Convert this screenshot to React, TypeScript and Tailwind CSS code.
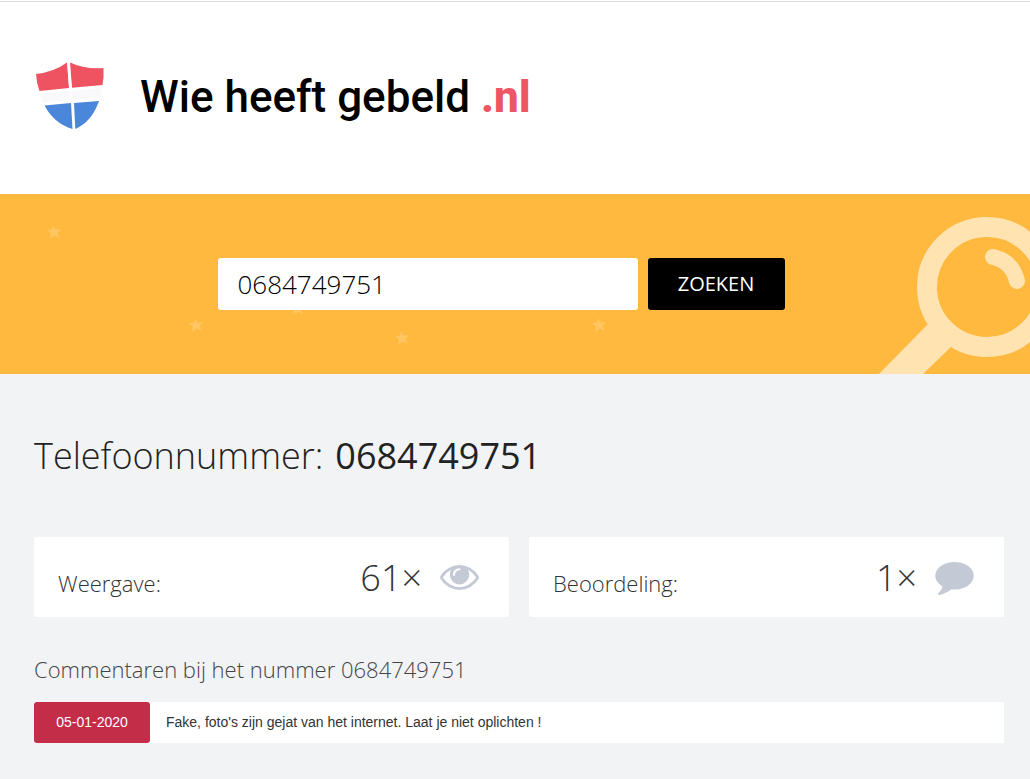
import { useState } from "react";

function ShieldLogo() {
  return (
    <svg viewBox="0 0 70 68" className="h-[68px] w-[70px] shrink-0" aria-hidden="true">
      <path d="M2 12Q20 10 33 0.500L35 26L5.500 29Q2.500 20.500 2 12Z" fill="#ef5362" />
      <path d="M36 0.500Q51 7.500 69.500 6Q70 14.500 68.500 23L38 25.800Z" fill="#ef5362" />
      <path d="M6 31.500L67.500 26L66 35.500L9 40.500Z" fill="#f9f9fc" />
      <path d="M33.300 0.500L35.800 0.500L40.500 66.500L38 66.500Z" fill="#ffffff" />
      <path d="M10.500 43.500L37 41L38.500 67Q20 61.500 10.500 43.500Z" fill="#4a86da" />
      <path d="M40 41L65 39Q58 59.500 41.300 67Z" fill="#4a86da" />
    </svg>
  );
}

const stars = [
  { x: 54, y: 38 },
  { x: 196, y: 131 },
  { x: 297, y: 114 },
  { x: 402, y: 144 },
  { x: 599, y: 131 },
];

function BannerArt() {
  return (
    <>
      <svg className="absolute top-0 left-0 h-[180px] w-[700px]" viewBox="0 0 700 180" aria-hidden="true">
        {stars.map((s) => (
          <path
            key={s.x}
            d="M-1 -7L1.500 -2.500L7 -3L3.500 1L6 6L0.500 3.500L-4 7L-3 1.500L-7 -2L-2 -2.500Z"
            transform={`translate(${s.x} ${s.y})`}
            fill="#ffc662"
          />
        ))}
      </svg>
      <svg className="absolute top-0 right-0 h-[180px] w-[160px]" viewBox="0 0 160 180" fill="none" aria-hidden="true">
        <path d="M8 181L58 130L82 152L52 181Z" fill="#ffe3b1" />
        <circle cx="117" cy="93" r="60" stroke="#ffe3b1" strokeWidth="20" />
        <path d="M123 63Q142 67 147 87" stroke="#ffe3b1" strokeWidth="16" strokeLinecap="round" />
      </svg>
    </>
  );
}

function EyeIcon() {
  return (
    <svg viewBox="0 384 1792 1152" className="h-[25px] w-[39px]" fill="#c3c9d5" aria-hidden="true">
      <path d="M1664 960q-152-236-381-353 61 104 61 225 0 185-131.500 316.500t-316.500 131.500-316.500-131.500-131.500-316.500q0-121 61-225-229 117-381 353 133 205 333.500 326.500t434.500 121.500 434.500-121.500 333.500-326.500zm-720-384q0-20-14-34t-34-14q-125 0-214.500 89.500t-89.500 214.500q0 20 14 34t34 14 34-14 14-34q0-86 61-147t147-61q20 0 34-14t14-34zm848 384q0 34-20 69-140 230-376.500 368.500t-499.500 138.500-499.500-139-376.500-368q-20-35-20-69t20-69q140-229 376.500-368t499.500-139 499.500 139 376.500 368q20 35 20 69z" />
    </svg>
  );
}

function CommentIcon() {
  return (
    <svg viewBox="0 256 1792 1536" className="mt-0.5 h-[33px] w-[39px]" fill="#c3c9d5" aria-hidden="true">
      <path d="M1792 896q0 174-120 321.500t-326 233-450 85.500q-70 0-145-8-198 175-460 242-49 14-114 22-17 2-30.500-9t-17.500-29v-1q-3-4-.5-12t2-10 4.500-9.500l6-9 7-8.500 8-9q7-8 31-34.500t34.500-38 31-39.500 32.500-51 27-59 26-76q-157-89-247.500-220t-90.500-281q0-130 71-248.500t191-204.500 286-136.500 348-50.500q244 0 450 85.500t326 233 120 321.500z" />
    </svg>
  );
}

function Stat({ label, value, icon }: { label: string; value: string; icon: React.ReactNode }) {
  return (
    <div className="flex h-20 items-center justify-between rounded-xs bg-white pr-[30px] pl-6 font-light text-[#333]">
      <span className="pt-3 text-[22px]">{label}</span>
      <div className="flex items-center gap-[18px]">
        <span className="pt-0.5 text-[36px]">
          {value}
          <span className="text-[36px]">×</span>
        </span>
        {icon}
      </div>
    </div>
  );
}

export default function App() {
  const [number, setNumber] = useState("0684749751");

  return (
    <div className="min-h-screen bg-[#f1f3f5] font-['Open_Sans','Noto_Sans',sans-serif]">
      <header className="mt-px h-[193px] border-t border-[#dddddd] bg-white pt-[59px] pr-[26px] pl-[34px]">
        <a href="#" className="flex items-center gap-9 font-['Roboto',sans-serif] text-[44px] leading-[68px] font-medium text-black">
          <ShieldLogo />
          <span className="pt-0.5">
            Wie heeft gebeld <span className="font-extrabold text-[#ee5566]">.nl</span>
          </span>
        </a>
      </header>

      <section className="relative h-[180px] overflow-hidden bg-[#ffb93e] pt-16 pr-[62px] pl-[34px]">
        <BannerArt />
        <form className="relative flex justify-center gap-2.5" onSubmit={(e) => e.preventDefault()}>
          <input
            type="text"
            aria-label="Telefoonnummer"
            value={number}
            onChange={(e) => setNumber(e.target.value)}
            className="h-[52px] w-[420px] rounded-[3px] bg-white px-5 text-[26px] font-light text-black outline-none"
          />
          <button type="submit" className="h-[52px] w-[137px] rounded-[3px] bg-black text-[20px] font-medium text-white">
            ZOEKEN
          </button>
        </form>
      </section>

      <main className="pt-14 pr-[26px] pb-9 pl-[34px]">
        <h1 className="flex items-baseline gap-3 text-[36px] leading-[52px] font-light text-[#222]">
          Telefoonnummer: <strong className="font-medium">0684749751</strong>
        </h1>

        <div className="mt-[55px] grid grid-cols-2 gap-5">
          <Stat label="Weergave:" value="61" icon={<EyeIcon />} />
          <Stat label="Beoordeling:" value="1" icon={<CommentIcon />} />
        </div>

        <h2 className="mt-9 text-[22px] leading-[33px] font-light text-[#444]">Commentaren bij het nummer 0684749751</h2>

        <article className="mt-4 flex bg-white font-['Liberation_Sans',Arial,sans-serif] text-[14px] leading-[41px]">
          <time dateTime="2020-01-05" className="w-[116px] shrink-0 rounded-[3px] bg-[#c42d47] text-center text-white">
            05-01-2020
          </time>
          <p className="px-4 text-[#333]">Fake, foto's zijn gejat van het internet. Laat je niet oplichten !</p>
        </article>
      </main>
    </div>
  );
}
